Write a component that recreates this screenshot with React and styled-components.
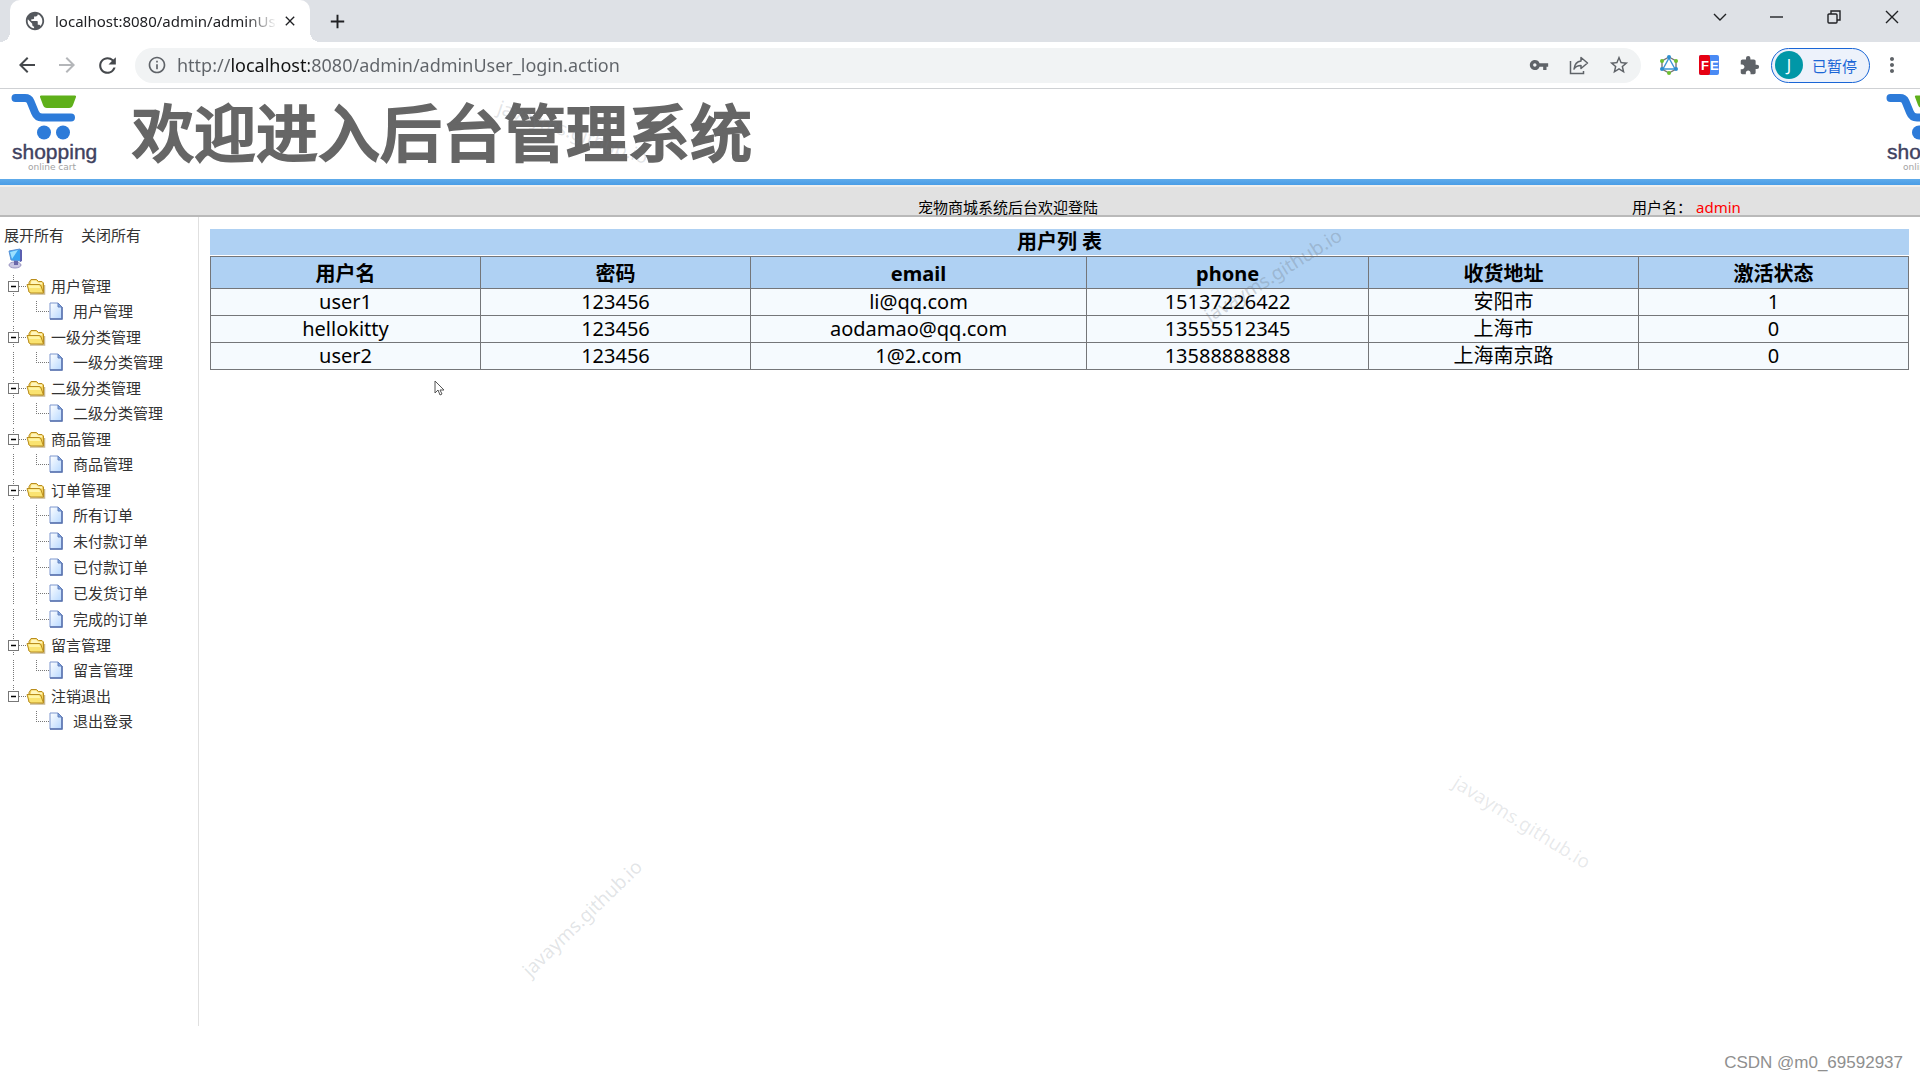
import React, { useState } from 'react'
import styled, { createGlobalStyle } from 'styled-components'
import {
  MdArrowBack,
  MdArrowForward,
  MdRefresh,
  MdInfoOutline,
  MdVpnKey,
  MdStarBorder,
  MdExtension,
  MdMoreVert,
  MdPublic,
  MdClose,
  MdAdd,
} from 'react-icons/md'

const GlobalStyle = createGlobalStyle`
* {
  box-sizing: border-box;
}
body {
  margin: 0;
  background: #fff;
  color: #000;
  font-family: "Noto Sans", "Noto Sans CJK SC", sans-serif;
}
button {
  padding: 0;
  border: 0;
  background: none;
  color: inherit;
  font: inherit;
}
a {
  color: inherit;
  text-decoration: none;
}
svg {
  display: block;
}
`

const Page = styled.div`
  position: relative;
  display: flex;
  flex-direction: column;
  min-height: 100vh;
  overflow: hidden;
`

/* browser bars */
const TabStrip = styled.div`
  display: flex;
  align-items: stretch;
  height: 42px;
  padding-left: 10px;
  background: #dee1e6;
`
const Tab = styled.div`
  position: relative;
  display: flex;
  align-items: center;
  width: 300px;
  padding: 0 12px 0 14px;
  border-radius: 10px 10px 0 0;
  background: #fff;
  color: #54585d;

  &::before,
  &::after {
    content: '';
    position: absolute;
    bottom: 0;
    width: 10px;
    height: 10px;
  }
  &::before {
    left: -10px;
    background: radial-gradient(circle at 0 0, #dee1e6 10px, #fff 10px);
  }
  &::after {
    right: -10px;
    background: radial-gradient(circle at 100% 0, #dee1e6 10px, #fff 10px);
  }
`
const TabTitle = styled.span`
  flex: 1;
  margin-left: 9px;
  overflow: hidden;
  color: #202124;
  font-size: 15px;
  line-height: 24px;
  white-space: nowrap;
  mask-image: linear-gradient(to right, #000 190px, transparent 222px);
`
const IconButton = styled.button`
  display: flex;
  align-items: center;
  justify-content: center;
  width: ${(props) => props.$w || 40}px;
  height: 34px;
  color: ${(props) => props.$color || '#5f6368'};
`
const NewTab = styled(IconButton)`
  align-self: center;
  margin-left: 7px;
`
const WindowButtons = styled.div`
  display: flex;
  margin-left: auto;
`
const Toolbar = styled.div`
  display: flex;
  align-items: center;
  height: 47px;
  padding: 0 8px 0 7px;
  border-bottom: 1px solid #cfd1d4;
  background: #fff;
`
const AddressBar = styled.form`
  display: flex;
  flex: 1;
  align-items: center;
  height: 35px;
  margin: 0 8px 0 7px;
  padding: 0 2px 0 12px;
  border-radius: 18px;
  background: #f1f3f4;
  color: #5f6368;
`
/* the host part of the address is darker than the rest */
const Address = styled.input`
  flex: 1;
  min-width: 0;
  height: 34px;
  margin-left: 10px;
  padding: 0;
  border: 0;
  outline: 0;
  background: linear-gradient(to right, #5f6368 54px, #111 54px, #111 132px, #5f6368 132px);
  background-clip: text;
  -webkit-background-clip: text;
  color: transparent;
  font-family: 'Noto Sans', sans-serif;
  font-size: 18px;
`
const Profile = styled.button`
  display: flex;
  align-items: center;
  gap: 9px;
  width: 99px;
  height: 35px;
  margin: 0 2px;
  padding-left: 3px;
  border: 1px solid #1a66d6;
  border-radius: 18px;
  background: #edf2fb;
  color: #1a66d6;
  font-size: 15px;
`
const Avatar = styled.span`
  width: 28px;
  height: 28px;
  border-radius: 50%;
  background: #0097a7;
  color: #fff;
  font-size: 16px;
  line-height: 28px;
  text-align: center;
`

/* page header */
const Banner = styled.header`
  display: flex;
  height: 90px;
  overflow: hidden;
`
const BannerTitle = styled.h1`
  margin: 0 0 0 31px;
  color: #666;
  font-family: 'Noto Sans CJK SC', sans-serif;
  font-size: 62px;
  font-weight: 500;
  line-height: 82px;
  white-space: nowrap;
  -webkit-text-stroke: 2px #666;
`
const BannerRepeat = styled.div`
  width: 45px;
  margin-left: auto;
  overflow: hidden;
`
const BlueLine = styled.div`
  height: 8px;
  border-bottom: 2px solid #f1efec;
  background: linear-gradient(#5fabea, #4a9de6);
`
const WelcomeBar = styled.div`
  display: grid;
  grid-template-columns: 1fr 768px 1fr;
  align-items: end;
  height: 30px;
  border-bottom: 2px solid #b9b9b9;
  background: #e1e1e1;
  font-size: 15px;
  line-height: 16px;
`
const Welcome = styled.span`
  grid-column: 2;
  padding-left: 96px;
  text-align: center;
`
const Account = styled.span`
  padding-left: 288px;
  white-space: nowrap;
`
const AccountName = styled.span`
  margin-left: 4px;
  color: #f00;
`

/* body */
const Body = styled.div`
  display: flex;
  flex: 1;
  margin-bottom: 54px;
`
const Sidebar = styled.nav`
  flex: none;
  width: 199px;
  border-right: 1px solid #e0e0e0;
  color: #333;
  font-size: 15px;
`
const TreeActions = styled.div`
  display: flex;
  gap: 17px;
  padding: 7px 4px 0;
  line-height: 22px;
`
const TreeRoot = styled.div`
  padding: 2px 0 3px 7px;
`
const TreeList = styled.ul`
  margin: 0;
  padding: 0;
  list-style: none;
`
const GroupRow = styled.div`
  display: flex;
  align-items: center;
  height: 25px;
`
const LeafRow = styled.li`
  display: flex;
  align-items: center;
  height: 26px;
`
const Label = styled.a`
  margin-left: ${(props) => props.$gap}px;
  line-height: 20px;
`

const Main = styled.main`
  flex: 1;
  padding: 12px 11px 0 11px;
`
const Table = styled.table`
  width: 100%;
  border-collapse: collapse;
  table-layout: fixed;
  font-size: 20px;
  line-height: 26px;
  text-align: center;
`
const Caption = styled.caption`
  margin-bottom: 1px;
  background: #afd1f3;
  font-weight: 700;
`
const Th = styled.th`
  width: ${(props) => props.$w};
  height: 32px;
  padding: 2px 0 0;
  border: 1px solid #747679;
  background: #afd1f3;
`
const Td = styled.td`
  height: 27px;
  padding: 0;
  border: 1px solid #747679;
  background: #f5fafe;
`

/* things lying over the page */
const Watermark = styled.span`
  position: absolute;
  left: ${(props) => props.$x}px;
  top: ${(props) => props.$y}px;
  transform: translate(-50%, -50%) rotate(${(props) => props.$angle}deg);
  color: rgba(110, 120, 130, ${(props) => props.$alpha});
  font-size: 19px;
  line-height: 24px;
  pointer-events: none;
`
const Pointer = styled.svg`
  position: absolute;
  left: 434px;
  top: 380px;
`
const Credit = styled.span`
  position: absolute;
  right: 17px;
  bottom: 8px;
  color: #8f8f8f;
  font-family: 'Liberation Sans', sans-serif;
  font-size: 17px;
  line-height: 18px;
`

const groups = [
  { name: '用户管理', items: ['用户管理'] },
  { name: '一级分类管理', items: ['一级分类管理'] },
  { name: '二级分类管理', items: ['二级分类管理'] },
  { name: '商品管理', items: ['商品管理'] },
  { name: '订单管理', items: ['所有订单', '未付款订单', '已付款订单', '已发货订单', '完成的订单'] },
  { name: '留言管理', items: ['留言管理'] },
  { name: '注销退出', items: ['退出登录'] },
]

const columns = [
  { title: '用户名', width: '15.9%' },
  { title: '密码', width: '15.9%' },
  { title: 'email', width: '19.8%' },
  { title: 'phone', width: '16.6%' },
  { title: '收货地址', width: '15.9%' },
  { title: '激活状态', width: '15.9%' },
]

const users = [
  ['user1', '123456', 'li@qq.com', '15137226422', '安阳市', '1'],
  ['hellokitty', '123456', 'aodamao@qq.com', '13555512345', '上海市', '0'],
  ['user2', '123456', '1@2.com', '13588888888', '上海南京路', '0'],
]

const LogoSvg = styled.svg`
  flex: none;
`

const Logo = () => (
  <LogoSvg width="101" height="90" viewBox="0 0 101 90">
    <path d="M15.500 9H25q4 0 5.500 3.500l4.500 11q2 5 7 5h29" fill="none" stroke="#2d7bd9" strokeWidth="8" strokeLinecap="round" />
    <path d="M41 6.500h34q1.500 0 1 1.500l-3 8q-1 3-4 3H47q-3 0-4-3l-3-8q-.5-1.500 1-1.500z" fill="#5fb01a" />
    <circle cx="44" cy="43.500" r="7" fill="#2d7bd9" />
    <circle cx="63" cy="43.500" r="7" fill="#2d7bd9" />
    <text x="12" y="70" fontFamily="Liberation Sans, sans-serif" fontSize="21" fill="#3f4260" stroke="#3f4260" strokeWidth="0.4">shopping</text>
    <text x="28" y="81" fontFamily="DejaVu Sans, sans-serif" fontSize="9" fill="#a3a3a3">online cart</text>
  </LogoSvg>
)

const Computer = () => (
  <svg width="18" height="22" viewBox="0 0 18 22">
    <ellipse cx="8" cy="17" rx="6" ry="3" fill="#c9c6e2" stroke="#9794c0" />
    <path d="M7 12l4 1v4H7z" fill="#6a67a8" />
    <path d="M2 3l11-2 1 12-10-1z" fill="#37a4f2" stroke="#5a92d6" />
    <path d="M3 4l8-2-6 9z" fill="#9be0ff" />
    <path d="M13 1l2 1v11l-2 1z" fill="#5b5fb0" />
  </svg>
)

const Folder = () => (
  <svg width="20" height="18" viewBox="0 0 20 18">
    <path d="M4 17h14.500V8" fill="none" stroke="#a58b4a" strokeOpacity="0.6" strokeWidth="1.500" />
    <path d="M3 15V5.500L5 2.500h5.500l2 2H16l1.500 1.500v10z" fill="#f3d15c" stroke="#b98d1d" />
    <path d="M5.500 3.500h4.500l2 2h4v2H4.500z" fill="#fff6bd" />
    <path d="M1 7.500h12q1.500 0 2 1.500l2.500 7H5q-1.500 0-2-1.500z" fill="#fae370" stroke="#b98d1d" />
    <path d="M2.500 8.500h10.500l1.500 2.500H3.500z" fill="#fff5a8" />
  </svg>
)

const Paper = () => (
  <svg width="15" height="19" viewBox="0 0 15 19">
    <defs>
      <linearGradient id="paper" x1="0" y1="0" x2="1" y2="1">
        <stop offset="0" stopColor="#fff" />
        <stop offset="1" stopColor="#b5d7ff" />
      </linearGradient>
    </defs>
    <path d="M1 1h8l4 4v12H1z" fill="url(#paper)" stroke="#7c97cf" />
    <path d="M13 5v12H1" fill="none" stroke="#5872ad" strokeWidth="1.500" />
    <path d="M9 1v4h4z" fill="#7fa6e2" stroke="#6580bb" />
  </svg>
)

const dots = { stroke: '#777', strokeDasharray: '1 1', fill: 'none' }

const Toggle = ({ open, last }) => (
  <svg width="26" height="24" viewBox="0 0 26 24">
    <path d={last ? 'M13.500 1v6' : 'M13.500 1v22'} {...dots} />
    <path d="M19 12.500h7" {...dots} />
    <rect x="8.500" y="7.500" width="10" height="10" fill="#fff" stroke="#777" />
    <path d={open ? 'M11 12.500h5' : 'M11 12.500h5M13.500 10v5'} stroke="#000" strokeWidth="1.500" />
  </svg>
)

const Branch = ({ outer, last }) => (
  <svg width="49" height="24" viewBox="0 0 49 24">
    {outer && <path d="M13.500 2v21" {...dots} />}
    <path d={last ? 'M36.500 2v10' : 'M36.500 2v21'} {...dots} />
    <path d="M36 12.500h13" {...dots} />
  </svg>
)

const Tree = () => {
  const [closed, setClosed] = useState([])

  const toggle = (name) =>
    setClosed(closed.includes(name) ? closed.filter((n) => n !== name) : [...closed, name])

  return (
    <Sidebar>
      <TreeActions>
        <button type="button" onClick={() => setClosed([])}>展开所有</button>
        <button type="button" onClick={() => setClosed(groups.map((g) => g.name))}>关闭所有</button>
      </TreeActions>
      <TreeRoot>
        <Computer />
      </TreeRoot>
      <TreeList>
        {groups.map((group, i) => {
          const open = !closed.includes(group.name)
          const last = i === groups.length - 1
          return (
            <li key={group.name}>
              <GroupRow>
                <button type="button" aria-label={group.name} aria-expanded={open} onClick={() => toggle(group.name)}>
                  <Toggle open={open} last={last} />
                </button>
                <Folder />
                <Label href="#" $gap={5}>{group.name}</Label>
              </GroupRow>
              {open && (
                <TreeList>
                  {group.items.map((item, k) => (
                    <LeafRow key={item}>
                      <Branch outer={!last} last={k === group.items.length - 1} />
                      <Paper />
                      <Label href="#" $gap={9}>{item}</Label>
                    </LeafRow>
                  ))}
                </TreeList>
              )}
            </li>
          )
        })}
      </TreeList>
    </Sidebar>
  )
}

const UserTable = () => (
  <Table>
    <Caption>用户列 表</Caption>
    <thead>
      <tr>
        {columns.map((col) => (
          <Th key={col.title} $w={col.width} scope="col">{col.title}</Th>
        ))}
      </tr>
    </thead>
    <tbody>
      {users.map((user) => (
        <tr key={user[0]}>
          {user.map((value, i) => (
            <Td key={columns[i].title}>{value}</Td>
          ))}
        </tr>
      ))}
    </tbody>
  </Table>
)

const Browser = () => {
  const [url, setUrl] = useState('http://localhost:8080/admin/adminUser_login.action')

  return (
    <>
      <TabStrip>
        <Tab>
          <MdPublic size={22} />
          <TabTitle>localhost:8080/admin/adminUser_login.action</TabTitle>
          <IconButton $w={16} $color="#202124" aria-label="关闭标签页"><MdClose size={16} /></IconButton>
        </Tab>
        <NewTab $color="#202124" aria-label="新标签页"><MdAdd size={23} /></NewTab>
        <WindowButtons>
          <IconButton $w={57} $color="#202124" aria-label="搜索标签页">
            <svg width="14" height="8" viewBox="0 0 14 8" fill="none" stroke="currentColor" strokeWidth="1.4"><path d="M1 1l6 6 6-6" /></svg>
          </IconButton>
          <IconButton $w={57} $color="#202124" aria-label="最小化">
            <svg width="13" height="2" viewBox="0 0 13 2" fill="none" stroke="currentColor" strokeWidth="1.4"><path d="M0 1h13" /></svg>
          </IconButton>
          <IconButton $w={58} $color="#202124" aria-label="还原">
            <svg width="14" height="14" viewBox="0 0 14 14" fill="none" stroke="currentColor" strokeWidth="1.4">
              <rect x="1" y="4" width="9" height="9" rx="1" />
              <path d="M4 4V1h9v9h-3" />
            </svg>
          </IconButton>
          <IconButton $w={57} $color="#202124" aria-label="关闭">
            <svg width="14" height="14" viewBox="0 0 14 14" fill="none" stroke="currentColor" strokeWidth="1.4"><path d="M1 1l12 12M13 1L1 13" /></svg>
          </IconButton>
        </WindowButtons>
      </TabStrip>
      <Toolbar>
        <IconButton $color="#45484c" aria-label="后退"><MdArrowBack size={24} /></IconButton>
        <IconButton $color="#b4b6b9" aria-label="前进"><MdArrowForward size={24} /></IconButton>
        <IconButton $w={41} $color="#45484c" aria-label="刷新"><MdRefresh size={25} /></IconButton>
        <AddressBar onSubmit={(e) => e.preventDefault()}>
          <MdInfoOutline size={20} />
          <Address aria-label="地址" value={url} onChange={(e) => setUrl(e.target.value)} />
          <IconButton type="button" aria-label="密码"><MdVpnKey size={20} /></IconButton>
          <IconButton type="button" aria-label="分享">
            <svg width="20" height="19" viewBox="0 0 20 19" fill="none" stroke="currentColor" strokeWidth="1.5">
              <path d="M1.500 5v12.500h13V15" />
              <path d="M12 1.500L18.500 7 12 12.500V9.500C8.500 9.500 6.500 10.500 5 13c.5-4 3-7.500 7-8z" strokeLinejoin="round" />
            </svg>
          </IconButton>
          <IconButton type="button" aria-label="收藏"><MdStarBorder size={22} /></IconButton>
        </AddressBar>
        <IconButton aria-label="GraphQL">
          <svg width="20" height="20" viewBox="0 0 20 20" fill="none">
            <path d="M10 2l7 4v8l-7 4-7-4V6z" stroke="#777" strokeWidth="1.4" />
            <path d="M10 3l6 11H4z" stroke="#3d95d6" strokeWidth="1.4" />
            <circle cx="10" cy="2" r="2" fill="#2c8ed0" />
            <circle cx="3" cy="6" r="2" fill="#6cc02f" />
            <circle cx="17" cy="6" r="2" fill="#6cc02f" />
            <circle cx="3" cy="14" r="2" fill="#2c8ed0" />
            <circle cx="17" cy="14" r="2" fill="#2c8ed0" />
            <circle cx="10" cy="18" r="2" fill="#6cc02f" />
          </svg>
        </IconButton>
        <IconButton aria-label="FE">
          <svg width="20" height="20" viewBox="0 0 20 20">
            <rect width="20" height="20" rx="2" fill="#4a8af4" />
            <path d="M2 0h7q2 0 2 2v16q0 2-2 2H2q-2 0-2-2V2q0-2 2-2z" fill="#e60012" />
            <text x="2" y="15" fontFamily="Liberation Sans, sans-serif" fontWeight="700" fontSize="13" fill="#fff">F</text>
            <text x="11" y="15" fontFamily="Liberation Sans, sans-serif" fontWeight="700" fontSize="13" fill="#fff">E</text>
          </svg>
        </IconButton>
        <IconButton aria-label="扩展程序"><MdExtension size={21} /></IconButton>
        <Profile><Avatar>J</Avatar>已暂停</Profile>
        <IconButton aria-label="菜单"><MdMoreVert size={24} /></IconButton>
      </Toolbar>
    </>
  )
}

const App = () => {
  return (
    <>
      <GlobalStyle />
      <Page>
        <Browser />
        <Banner>
          <Logo />
          <BannerTitle>欢迎进入后台管理系统</BannerTitle>
          <BannerRepeat aria-hidden="true">
            <Logo />
          </BannerRepeat>
        </Banner>
        <BlueLine />
        <WelcomeBar>
          <Welcome>宠物商城系统后台欢迎登陆</Welcome>
          <Account>用户名：<AccountName>admin</AccountName></Account>
        </WelcomeBar>
        <Body>
          <Tree />
          <Main>
            <UserTable />
          </Main>
        </Body>
        <Watermark $x={573} $y={132} $angle={19} $alpha={0.2}>javayms.github.io</Watermark>
        <Watermark $x={582} $y={918} $angle={-44} $alpha={0.2}>javayms.github.io</Watermark>
        <Watermark $x={1522} $y={822} $angle={32} $alpha={0.16}>javayms.github.io</Watermark>
        <Watermark $x={1273} $y={275} $angle={-32} $alpha={0.3}>javayms.github.io</Watermark>
        <Pointer width="11" height="16" viewBox="0 0 11 16">
          <path d="M1 1v12l3-3 2 5 2-1-2-4h4z" fill="#fff" stroke="#555" />
        </Pointer>
        <Credit>CSDN @m0_69592937</Credit>
      </Page>
    </>
  )
}

export default App
